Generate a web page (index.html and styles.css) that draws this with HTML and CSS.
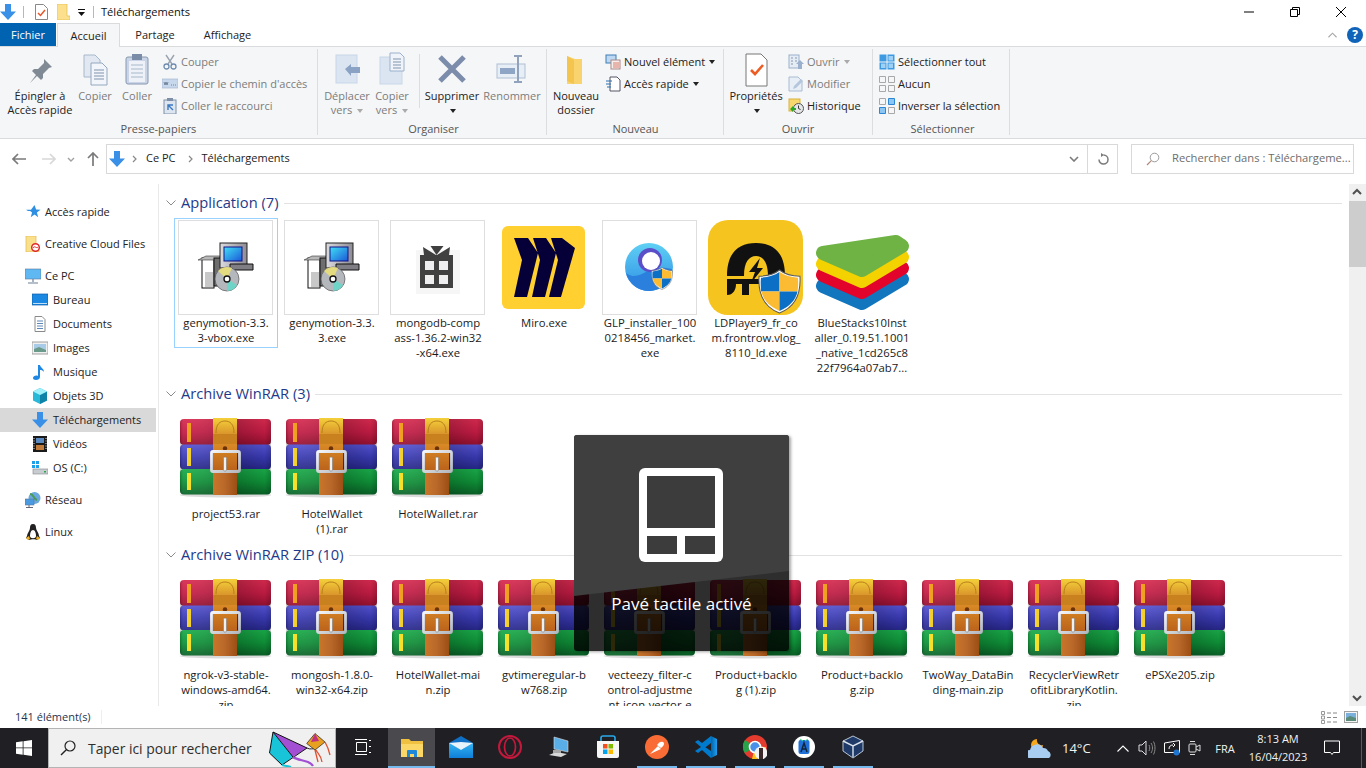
FILE: index.html
```html
<!DOCTYPE html>
<html lang="fr">
<head>
<meta charset="utf-8">
<title>Téléchargements</title>
<link rel="stylesheet" href="styles.css">
</head>
<body>
<svg class="defs" aria-hidden="true">
  <defs>
    <linearGradient id="gRed" x1="0" y1="0" x2="0" y2="1"><stop offset="0" stop-color="#d92b50"/><stop offset=".5" stop-color="#c41c44"/><stop offset="1" stop-color="#96102f"/></linearGradient>
    <linearGradient id="gBlue" x1="0" y1="0" x2="0" y2="1"><stop offset="0" stop-color="#5654d4"/><stop offset=".5" stop-color="#3a3ab4"/><stop offset="1" stop-color="#262688"/></linearGradient>
    <linearGradient id="gGreen" x1="0" y1="0" x2="0" y2="1"><stop offset="0" stop-color="#1aac4a"/><stop offset=".5" stop-color="#0f9238"/><stop offset="1" stop-color="#0a6428"/></linearGradient>
    <linearGradient id="gShade" x1="0" y1="0" x2="1" y2="0"><stop offset="0" stop-color="#000" stop-opacity=".2"/><stop offset=".05" stop-color="#fff" stop-opacity=".06"/><stop offset=".6" stop-color="#000" stop-opacity=".22"/><stop offset=".93" stop-color="#000" stop-opacity=".05"/><stop offset="1" stop-color="#000" stop-opacity=".2"/></linearGradient>
    <linearGradient id="gGold" x1="0" y1="0" x2="0" y2="1"><stop offset="0" stop-color="#f4d03a"/><stop offset="1" stop-color="#d8922a"/></linearGradient>
    <linearGradient id="gBelt" x1="0" y1="0" x2="0" y2="1"><stop offset="0" stop-color="#d98a26"/><stop offset="1" stop-color="#b9601a"/></linearGradient>
    <linearGradient id="gBelt2" x1="0" y1="0" x2="1" y2="0"><stop offset="0" stop-color="#c9762a"/><stop offset=".5" stop-color="#b9682a"/><stop offset="1" stop-color="#9c4e14"/></linearGradient>
    <linearGradient id="gSilver" x1="0" y1="0" x2="1" y2="1"><stop offset="0" stop-color="#f4f5f7"/><stop offset="1" stop-color="#b4b8be"/></linearGradient>
    <linearGradient id="gScreen" x1="0" y1="0" x2="1" y2="1"><stop offset="0" stop-color="#3fe0f4"/><stop offset="1" stop-color="#1b58d8"/></linearGradient>
    <linearGradient id="gMon" x1="0" y1="0" x2="1" y2="0"><stop offset="0" stop-color="#dcdce0"/><stop offset="1" stop-color="#8c8c92"/></linearGradient>
    <linearGradient id="gGlp" x1="0" y1="0" x2="0" y2="1"><stop offset="0" stop-color="#5fd0f4"/><stop offset="1" stop-color="#2f8fe4"/></linearGradient>
    <linearGradient id="gMail" x1="0" y1="0" x2="0" y2="1"><stop offset="0" stop-color="#33b6f2"/><stop offset="1" stop-color="#0f7ed8"/></linearGradient>
    <linearGradient id="gVs" x1="0" y1="0" x2="1" y2="0"><stop offset="0" stop-color="#0065a9"/><stop offset="1" stop-color="#1f9cf0"/></linearGradient>
    <symbol id="rar" viewBox="0 0 96 96">
      <ellipse cx="47.500" cy="84" rx="46" ry="2.500" fill="#000" opacity=".14"/>
      <rect x="2" y="8" width="91" height="26" rx="4" fill="url(#gRed)"/>
      <rect x="2" y="33.500" width="91" height="25" rx="4" fill="url(#gBlue)"/>
      <rect x="2" y="58" width="91" height="25.500" rx="4" fill="url(#gGreen)"/>
      <rect x="2" y="8" width="91" height="75.500" rx="4" fill="url(#gShade)"/>
      <rect x="9" y="12" width="4" height="19" fill="#f0a020"/>
      <rect x="9" y="37" width="4" height="18" fill="#f2d030"/>
      <rect x="9" y="62" width="4" height="17" fill="#f6e02c"/>
      <rect x="35" y="7" width="24" height="17" fill="url(#gGold)"/>
      <path d="M38 22c0-9 4-12 9-12s9 3 9 12" fill="none" stroke="#b87e1c" stroke-width="1"/>
      <rect x="35" y="23" width="24" height="10" fill="#c9801f"/>
      <rect x="35" y="33" width="24" height="28" fill="url(#gBelt)"/>
      <circle cx="47" cy="37.500" r="2.200" fill="#6b3208"/>
      <rect x="35" y="60" width="24" height="24" fill="url(#gBelt2)"/>
      <rect x="33.500" y="40.500" width="28" height="20" rx="1.500" fill="none" stroke="url(#gSilver)" stroke-width="2.800"/>
      <rect x="45.500" y="46" width="3" height="14" rx="1.200" fill="#eef0f2" stroke="#7a7a7a" stroke-width=".6"/>
    </symbol>
    <symbol id="setup" viewBox="0 0 96 96">
      <rect x="24" y="38" width="12" height="30" fill="#fff" stroke="#111"/>
      <rect x="27" y="52" width="8" height="15" fill="#c8c8c8"/>
      <path d="M20 40l8-4h14v4z" fill="#b8b8b8" stroke="#333" stroke-width=".6"/>
      <rect x="36" y="38" width="10" height="28" fill="#6e6e6e" stroke="#111"/>
      <rect x="42" y="23" width="27" height="25" fill="url(#gMon)" stroke="#222"/>
      <rect x="46" y="27" width="18" height="14" fill="url(#gScreen)" stroke="#12128a"/>
      <path d="M52 44h23v6H52z" fill="#7e7e84" stroke="#111"/>
      <circle cx="49" cy="59" r="12" fill="#b4b8bc" stroke="#555" stroke-width=".7"/>
      <path d="M49 59l-9-8a12 12 0 0 1 14-3z" fill="#e4da80"/>
      <path d="M49 59l10 6a12 12 0 0 1-10 6z" fill="#6ed4c8"/>
      <circle cx="49" cy="59" r="3" fill="#fff" stroke="#111" stroke-width="1.300"/>
    </symbol>
    <symbol id="shield" viewBox="0 0 42 44">
      <path d="M21 1c5 4 12 6 20 6 1 16-4 30-20 36C5 37 0 23 1 7c8 0 15-2 20-6z" fill="#fff" stroke="#5a5a5a"/>
      <path d="M21 3v19H3C2.500 16 2.500 11 3 8.500 10 8 16 6.500 21 3z" fill="#0b6fc6"/>
      <path d="M21 3c5 3.500 11 5 18 5.500.4 4 .4 9-.4 13.500H21z" fill="#fbbb33"/>
      <path d="M3.300 22H21v19C10 36 5 30 3.300 22z" fill="#fbbb33"/>
      <path d="M21 22h17.600C36.800 30 32 36 21 41z" fill="#0b6fc6"/>
    </symbol>
    <symbol id="down" viewBox="0 0 16 16">
      <path d="M5 0h6v7.500h5L8 16 0 7.500h5z" fill="#3a8fe6"/>
    </symbol>
  </defs>
</svg>

<div class="window">
  <header class="titlebar">
    <svg class="qa-down" viewBox="0 0 16 16"><use href="#down"/></svg>
    <span class="vsep"></span>
    <svg class="qa-prop" viewBox="0 0 13 16"><path d="M.5.500h8l4 4v11H.5z" fill="#fff" stroke="#888"/><path d="M3 9l2.500 2.500L10 6" fill="none" stroke="#e8562a" stroke-width="1.500"/></svg>
    <svg class="qa-fold" viewBox="0 0 13 16"><path d="M0 0h10v12h3v4H0z" fill="#fce08e" stroke="#e8c050" stroke-width=".8"/></svg>
    <svg class="qa-more" viewBox="0 0 8 8"><path d="M0 0h7v1H0zM0 3h7L3.500 7z" fill="#111"/></svg>
    <span class="vsep vsep-b"></span>
    <span class="wintitle">Téléchargements</span>
    <div class="winctl">
      <span class="winbtn"><svg viewBox="0 0 10 10"><path d="M0 5h10" stroke="#000"/></svg></span>
      <span class="winbtn"><svg viewBox="0 0 10 10"><path d="M.5 2.500h7v7h-7zM2.500 2.500v-2h7v7h-2" fill="none" stroke="#000"/></svg></span>
      <span class="winbtn"><svg viewBox="0 0 10 10"><path d="M0 0l10 10M10 0L0 10" stroke="#000"/></svg></span>
    </div>
  </header>

  <nav class="tabs">
    <span class="tab tab-file">Fichier</span>
    <span class="tab tab-on">Accueil</span>
    <span class="tab tab-share">Partage</span>
    <span class="tab tab-view">Affichage</span>
    <span class="tabs-right">
      <svg class="collapse" viewBox="0 0 10 6"><path d="M.5 5.500L5 1l4.500 4.500" fill="none" stroke="#a8a8a8" stroke-width="1.200"/></svg>
      <span class="help">?</span>
    </span>
  </nav>

  <section class="ribbon">
    <div class="rgroup rg-1">
      <div class="rbody">
        <div class="rbtn w74"><svg class="ric" viewBox="0 0 36 36"><path d="M22 8l8 8-3 1-6 6v4l-2 2-4-4-7 7 6-8-4-4 2-2h4l6-6z" fill="#808a94"/></svg><span class="rlabel">Épingler à<br>Accès rapide</span></div>
        <div class="rbtn w36 off"><svg class="ric" viewBox="0 0 36 36"><path d="M7 4h11l5 5v17H7z" fill="#e2e8f2" stroke="#a8b8cc"/><path d="M14 12h11l5 5v17H14z" fill="#f2f5fa" stroke="#94a8c0"/><path d="M17 19h10M17 22h10M17 25h10M17 28h10" stroke="#7e93ad"/></svg><span class="rlabel">Copier</span></div>
        <div class="rbtn w48 off"><svg class="ric" viewBox="0 0 36 36"><rect x="7" y="6" width="22" height="27" rx="2" fill="#c9d4e6" stroke="#8898b0"/><rect x="10" y="10" width="16" height="21" fill="#eef2f8"/><path d="M12 14h12M12 18h12M12 22h12M12 26h12" stroke="#a8b8cc"/><rect x="13" y="3" width="10" height="6" fill="#7a8ca8"/></svg><span class="rlabel">Coller</span></div>
        <div class="rcol rc-1">
          <div class="rsmall off"><svg class="sic" viewBox="0 0 16 16"><path d="M4 1l6 9M12 1L6 10" stroke="#9aa4b0" stroke-width="1.400" fill="none"/><circle cx="4.500" cy="12.500" r="2.500" fill="none" stroke="#6f8db0" stroke-width="1.300"/><circle cx="11.500" cy="12.500" r="2.500" fill="none" stroke="#6f8db0" stroke-width="1.300"/></svg>Couper</div>
          <div class="rsmall off"><svg class="sic" viewBox="0 0 16 16"><rect y="3" width="16" height="9" fill="#c8d8ec" stroke="#9ab0cc" stroke-width=".6"/><path d="M2 6l1 3 1-3 1 3 1-3M9 9h1M11 9h1M13 9h1" stroke="#50667e" stroke-width=".7" fill="none"/></svg>Copier le chemin d'accès</div>
          <div class="rsmall off"><svg class="sic" viewBox="0 0 16 16"><rect x="2" y="2" width="12" height="14" fill="#dde5f0" stroke="#7e90a8"/><rect x="5" y="0" width="6" height="3" fill="#7e90a8"/><path d="M6 12V7h5M6 7l5 5" stroke="#3a78c0" stroke-width="1.400" fill="none"/></svg>Coller le raccourci</div>
        </div>
      </div>
      <div class="rname">Presse-papiers</div>
    </div>

    <div class="rgroup rg-2">
      <div class="rbody">
        <div class="rbtn w46 off"><svg class="ric" viewBox="0 0 36 36"><rect x="7" y="4" width="21" height="28" fill="#dbe5f2" stroke="#c8d6e8"/><path d="M16 18l6-5v3h9v6h-9v3z" fill="#8aa2c4"/></svg><span class="rlabel">Déplacer<br>vers <i class="caret caret-off"></i></span></div>
        <div class="rbtn w44 off"><svg class="ric" viewBox="0 0 36 36"><rect x="6" y="6" width="22" height="27" fill="#dbe5f2" stroke="#c8d6e8"/><path d="M16 2h10l4 4v14H16z" fill="#f0f4fa" stroke="#9ab0cc"/><path d="M19 8h8M19 11h8M19 14h8M19 17h8" stroke="#7e93ad"/></svg><span class="rlabel">Copier<br>vers <i class="caret caret-off"></i></span></div>
        <span class="rdiv"></span>
        <div class="rbtn w60"><svg class="ric" viewBox="0 0 36 36"><path d="M6 6l24 24M30 6L6 30" stroke="#7c8cab" stroke-width="5"/></svg><span class="rlabel">Supprimer<br><i class="caret"></i></span></div>
        <div class="rbtn w60 off"><svg class="ric" viewBox="0 0 36 36"><rect x="3" y="13" width="28" height="14" fill="#e8eef6" stroke="#b0c0d4"/><rect x="6" y="17" width="15" height="6" fill="#8fa5c6"/><path d="M24 5v26M20 5h8M20 31h8" stroke="#90a2bc" stroke-width="2"/></svg><span class="rlabel">Renommer</span></div>
      </div>
      <div class="rname">Organiser</div>
    </div>

    <div class="rgroup rg-3">
      <div class="rbody">
        <div class="rbtn w50"><svg class="ric" viewBox="0 0 36 36"><path d="M9 5l8 3h7v25H9z" fill="#f8d36e"/><path d="M9 5l7 4v24l-7-3z" fill="#f3c44e"/></svg><span class="rlabel">Nouveau<br>dossier</span></div>
        <div class="rcol rc-3">
          <div class="rsmall"><svg class="sic" viewBox="0 0 16 16"><rect x="1" y="1" width="10" height="8" fill="#bcd8f2" stroke="#3f7fb5"/><rect x="6" y="6" width="9" height="9" fill="#f6f0ec" stroke="#a88"/><path d="M8 9h6M8 11h6M8 13h6" stroke="#d87a6a"/></svg>Nouvel élément<i class="caret caret-gap"></i></div>
          <div class="rsmall"><svg class="sic" viewBox="0 0 16 16"><path d="M5 1h7l3 3v11H5z" fill="#fff" stroke="#556"/><path d="M1 5h6M1 8h5M2 11h4" stroke="#2c6fb0"/></svg>Accès rapide<i class="caret caret-gap"></i></div>
        </div>
      </div>
      <div class="rname">Nouveau</div>
    </div>

    <div class="rgroup rg-4">
      <div class="rbody">
        <div class="rbtn w58"><svg class="ric" viewBox="0 0 36 36"><path d="M8 3h15l6 6v26H8z" fill="#fff" stroke="#777"/><path d="M13 19l4 4 8-9" fill="none" stroke="#ee5c24" stroke-width="2.600"/></svg><span class="rlabel">Propriétés<br><i class="caret"></i></span></div>
        <div class="rcol rc-4">
          <div class="rsmall off"><svg class="sic" viewBox="0 0 16 16"><rect x="1" y="1" width="10" height="13" fill="#e6ecf4" stroke="#9ab0cc"/><path d="M3 4h2M3 7h2M3 10h2M7 4h2M7 7h2" stroke="#8298b4"/><path d="M12 6l4 4h-2v5h-4v-5H8z" fill="#9ab0cc"/></svg>Ouvrir<i class="caret caret-off caret-gap"></i></div>
          <div class="rsmall off"><svg class="sic" viewBox="0 0 16 16"><path d="M1 1h9l4 4v10H1z" fill="#e8eef6" stroke="#a8bcd4"/><path d="M5 13l1-3 7-7 2 2-7 7z" fill="#b4c6dc"/></svg>Modifier</div>
          <div class="rsmall"><svg class="sic" viewBox="0 0 16 16"><rect x="1" y="1" width="11" height="12" fill="#f8d86c" stroke="#d8b240"/><circle cx="10.500" cy="10.500" r="5" fill="#e4e6e8" stroke="#555"/><path d="M10.500 7.500v3l2 1" stroke="#333" fill="none"/><path d="M2 11l3-3v2h3v2H5v2z" fill="#2aa82a"/></svg>Historique</div>
        </div>
      </div>
      <div class="rname">Ouvrir</div>
    </div>

    <div class="rgroup rg-5">
      <div class="rbody">
        <div class="rcol rc-5">
          <div class="rsmall"><svg class="sic" viewBox="0 0 16 16"><rect x=".5" y=".5" width="15" height="15" fill="#3e9be2"/><path d="M8 0v16M0 8h16" stroke="#f5f6f7"/><rect x="9.500" y="2" width="4.500" height="4.500" fill="#9fd0f5"/><rect x="2" y="9.500" width="4.500" height="4.500" fill="#9fd0f5"/><rect x="9.500" y="9.500" width="4.500" height="4.500" fill="#9fd0f5"/></svg>Sélectionner tout</div>
          <div class="rsmall"><svg class="sic" viewBox="0 0 16 16"><path d="M.5.500h6v6h-6zM9.500.500h6v6h-6zM.5 9.500h6v6h-6zM9.500 9.500h6v6h-6z" fill="none" stroke="#a8a8a8"/></svg>Aucun</div>
          <div class="rsmall"><svg class="sic" viewBox="0 0 16 16"><path d="M.5.500h6v6h-6zM9.500 9.500h6v6h-6z" fill="none" stroke="#a8a8a8"/><path d="M9.500.500h6v6h-6zM.5 9.500h6v6h-6z" fill="#8cc6f2" stroke="#2c86d6"/></svg>Inverser la sélection</div>
        </div>
      </div>
      <div class="rname">Sélectionner</div>
    </div>
  </section>

  <div class="navrow">
    <svg class="nv nv-back" viewBox="0 0 14 12"><path d="M6 1L1 6l5 5M1 6h13" fill="none" stroke="#7a7a7a" stroke-width="1.700"/></svg>
    <svg class="nv nv-fwd" viewBox="0 0 14 12"><path d="M8 1l5 5-5 5M13 6H0" fill="none" stroke="#d8d8d8" stroke-width="1.700"/></svg>
    <svg class="nv nv-drop" viewBox="0 0 8 5"><path d="M1 1l3 3 3-3" fill="none" stroke="#a0a0a0" stroke-width="1.400"/></svg>
    <svg class="nv nv-up" viewBox="0 0 12 14"><path d="M1 6l5-5 5 5M6 1v13" fill="none" stroke="#7a7a7a" stroke-width="1.700"/></svg>
    <div class="addr">
      <svg class="addr-ic" viewBox="0 0 16 16"><use href="#down"/></svg>
      <svg class="crumb-sep" viewBox="0 0 5 8"><path d="M1 1l3 3-3 3" fill="none" stroke="#888" stroke-width="1.200"/></svg>
      <span class="crumb">Ce PC</span>
      <svg class="crumb-sep" viewBox="0 0 5 8"><path d="M1 1l3 3-3 3" fill="none" stroke="#888" stroke-width="1.200"/></svg>
      <span class="crumb">Téléchargements</span>
      <svg class="addr-drop" viewBox="0 0 10 6"><path d="M1 1l4 4 4-4" fill="none" stroke="#7a7a7a" stroke-width="1.600"/></svg>
      <span class="addr-refresh"><svg viewBox="0 0 12 12"><path d="M6.500 2A4.500 4.500 0 1 1 2 6.500" fill="none" stroke="#7a7a7a" stroke-width="1.500"/><path d="M4 0l3 2-3 2z" fill="#7a7a7a"/></svg></span>
    </div>
    <div class="searchbox">
      <svg class="search-ic" viewBox="0 0 14 14"><circle cx="8.500" cy="5.500" r="4.300" fill="none" stroke="#9a9aa0"/><path d="M5.300 8.700L1 13" stroke="#b08878" stroke-width="1.200"/></svg>
      <span class="search-text">Rechercher dans : Téléchargeme...</span>
    </div>
  </div>

  <div class="work">
    <aside class="side">
      <div class="sgroup">
        <div class="sitem top"><svg class="sico" viewBox="0 0 16 16"><path d="M9.500 1l1.600 4.600 4.400.1-3.600 2.800 1.300 4.700-3.700-2.700-3.800 2.700 1.400-4.700-2-1.500H3L1 5.800h5z" fill="#2e8fe2"/></svg>Accès rapide</div>
      </div>
      <div class="sgroup">
        <div class="sitem top"><svg class="sico" viewBox="0 0 16 16"><path d="M1 0h10v11h3v5H1z" fill="#fbe08c" stroke="#e0b850" stroke-width=".7"/><circle cx="10.500" cy="11.500" r="3.800" fill="#fff" stroke="#e02828" stroke-width="1.500"/><path d="M8 12c2-3 3 1 5-1" stroke="#e02828" fill="none"/></svg>Creative Cloud Files</div>
      </div>
      <div class="sgroup">
        <div class="sitem top"><svg class="sico" viewBox="0 0 16 16"><rect y="1" width="16" height="10" fill="#5fb8f2" stroke="#5a7a9a" stroke-width=".6"/><path d="M8 11v3M3 15h10" stroke="#6a8098" stroke-width="1.200"/></svg>Ce PC</div>
        <div class="sitem sub"><svg class="sico" viewBox="0 0 16 16"><rect y="2" width="16" height="11" fill="#1b88e2" stroke="#0f5ea8" stroke-width=".7"/><path d="M1 11.500h14" stroke="#bfe0f8"/></svg>Bureau</div>
        <div class="sitem sub"><svg class="sico" viewBox="0 0 16 16"><path d="M3 .5h7l3 3v12H3z" fill="#fff" stroke="#8a8a8a"/><path d="M5 5h6M5 7.500h6M5 10h6M5 12.500h6" stroke="#5b88b8"/></svg>Documents</div>
        <div class="sitem sub"><svg class="sico" viewBox="0 0 16 16"><rect y="2" width="16" height="12" fill="#f0f0f0" stroke="#8a8a8a" stroke-width=".8"/><rect x="2" y="4" width="12" height="8" fill="#a8cce8"/><path d="M2 9l5-2 7 3v2H2z" fill="#6a9a8a"/></svg>Images</div>
        <div class="sitem sub"><svg class="sico" viewBox="0 0 16 16"><path d="M6 1h2c.5 3 4 3.500 4 7-1-1.500-2.500-2-4-2v7c0 2-2 3-4 3s-3-1-3-2c0-2 3-3 5-2z" fill="#1f88e2"/></svg>Musique</div>
        <div class="sitem sub"><svg class="sico" viewBox="0 0 16 16"><path d="M8 0l7 3.500v9L8 16l-7-3.500v-9z" fill="#28b8d8"/><path d="M8 7l7-3.500v9L8 16z" fill="#0f82a8"/><path d="M8 0l7 3.500L8 7 1 3.500z" fill="#9ff0f8"/></svg>Objets 3D</div>
        <div class="sitem sub sel"><svg class="sico" viewBox="0 0 16 16"><use href="#down"/></svg>Téléchargements</div>
        <div class="sitem sub"><svg class="sico" viewBox="0 0 16 16"><rect x="1" y="0" width="14" height="16" fill="#1a1a1a"/><rect x="4" y="2" width="8" height="5" fill="#5a88c0"/><rect x="4" y="9" width="8" height="5" fill="#c07a3a"/><path d="M2 2v12M14 2v12" stroke="#ddd" stroke-dasharray="1 1.500"/></svg>Vidéos</div>
        <div class="sitem sub"><svg class="sico" viewBox="0 0 16 16"><rect x="0" y="1" width="3" height="3" fill="#1ea0e8"/><rect x="4" y="1" width="3" height="3" fill="#1ea0e8"/><rect x="0" y="5" width="3" height="3" fill="#1ea0e8"/><rect x="4" y="5" width="3" height="3" fill="#1ea0e8"/><rect x="1" y="9" width="15" height="5" fill="#c8ccd0" stroke="#80868c" stroke-width=".6"/><rect x="12" y="11" width="2" height="1.500" fill="#2aaa4a"/></svg>OS (C:)</div>
      </div>
      <div class="sgroup">
        <div class="sitem top"><svg class="sico" viewBox="0 0 16 16"><circle cx="9.500" cy="6" r="6" fill="#6aa8e0"/><path d="M5 2c4 0 3 5 7 6" stroke="#4a9a5a" stroke-width="2" fill="none"/><rect y="7" width="9" height="6" fill="#4a9ae2" stroke="#5a7a9a" stroke-width=".6"/><path d="M4 13v2M1 15.500h7" stroke="#667"/></svg>Réseau</div>
      </div>
      <div class="sgroup">
        <div class="sitem top"><svg class="sico" viewBox="0 0 16 16"><path d="M8 0c2.500 0 3 2 3 4 0 2 3 5 3 8l1 2-3 2c-1-1-6-1-8 0L1 14l1-2c0-3 3-5 3-8 0-2 .5-4 3-4z" fill="#222"/><path d="M8 6c2 0 3 3 3 6s-6 3-6 0 1-6 3-6z" fill="#fff"/><path d="M1 14l3-2 1 3-2 1zM15 14l-3-2-1 3 2 1z" fill="#f0b020"/></svg>Linux</div>
      </div>
    </aside>

    <main class="content">
      <section class="group">
        <h2 class="ghead"><svg class="gchev" viewBox="0 0 10 6"><path d="M.5.500L5 5 9.500.5" fill="none" stroke="#8a8a8a"/></svg><span>Application (7)</span><i class="gline"></i></h2>
        <div class="tiles">
          <div class="tile selected"><div class="thumb framed"><svg class="full" viewBox="0 0 96 96"><use href="#setup"/></svg></div><div class="lbl">genymotion-3.3.<br>3-vbox.exe</div></div>
          <div class="tile"><div class="thumb framed"><svg class="full" viewBox="0 0 96 96"><use href="#setup"/></svg></div><div class="lbl">genymotion-3.3.<br>3.exe</div></div>
          <div class="tile"><div class="thumb framed"><svg class="full" viewBox="0 0 96 96"><rect x="26" y="30" width="44" height="44" fill="#f6f6f6"/><path d="M30 35h33v33H30z" fill="#404040"/><path d="M46 35l-13-8 1 8zM47 35l13-8-1 8z" fill="#404040"/><path d="M46.500 35l-6-9h13z" fill="#404040"/><rect x="35" y="41" width="9" height="9" fill="#eeeef0"/><rect x="49" y="41" width="9" height="9" fill="#eeeef0"/><rect x="35" y="55" width="9" height="9" fill="#eeeef0"/><rect x="49" y="55" width="9" height="9" fill="#eeeef0"/></svg></div><div class="lbl">mongodb-comp<br>ass-1.36.2-win32<br>-x64.exe</div></div>
          <div class="tile"><div class="thumb"><svg class="full" viewBox="0 0 96 96"><rect x="6" y="6" width="83" height="83" rx="6" fill="#ffd02f"/><path d="M18 18h14l10 15-11 44H18l8-37zM37 18h13l10 15-11 44H36l8-37zM55 18h11l13 10-14 49H53l9-37z" fill="#050038"/></svg></div><div class="lbl">Miro.exe</div></div>
          <div class="tile"><div class="thumb framed"><svg class="full" viewBox="0 0 96 96"><circle cx="47" cy="47" r="24" fill="url(#gGlp)"/><path d="M24 53c8 6 14 2 22-2s14-4 24-2c-2 13-12 22-23 22-11 0-21-8-23-18z" fill="#2a80dc"/><circle cx="48" cy="40" r="12" fill="#5a4fc8"/><circle cx="49" cy="41" r="9" fill="#fff"/><svg x="49" y="47" width="22" height="23" viewBox="0 0 42 44"><use href="#shield"/></svg></svg></div><div class="lbl">GLP_installer_100<br>0218456_market.<br>exe</div></div>
          <div class="tile"><div class="thumb"><svg class="full" viewBox="0 0 96 96"><rect width="95" height="95" rx="20" fill="#f5c41e"/><path d="M19 56C19 33 30 23 48 23s29 10 29 33H60C60 42 55 36 48 36s-12 6-12 20z" fill="#111"/><path d="M19 59h32v5H41v11H34V64h-6c0 6-3 11-9 11z" fill="#111"/><path d="M52 38L41 52h6l-4 11 12-15h-6z" fill="#111"/><svg x="50" y="49" width="43" height="45" viewBox="0 0 42 44"><use href="#shield"/></svg></svg></div><div class="lbl">LDPlayer9_fr_co<br>m.frontrow.vlog_<br>8110_ld.exe</div></div>
          <div class="tile"><div class="thumb"><svg class="full" viewBox="0 0 96 96"><g stroke-linejoin="round" stroke-width="14"><path d="M9 33L82 22l6 4-40 24z" transform="translate(0 33)" fill="#1176bd" stroke="#1176bd"/><path d="M9 33L82 22l6 4-40 24z" transform="translate(0 22)" fill="#e2042a" stroke="#e2042a"/><path d="M9 33L82 22l6 4-40 24z" transform="translate(0 11)" fill="#f3d200" stroke="#f3d200"/><path d="M9 33L82 22l6 4-40 24z" fill="#6fb345" stroke="#6fb345"/></g></svg></div><div class="lbl">BlueStacks10Inst<br>aller_0.19.51.1001<br>_native_1cd265c8<br>22f7964a07ab7...</div></div>
        </div>
      </section>
      <section class="group">
        <h2 class="ghead"><svg class="gchev" viewBox="0 0 10 6"><path d="M.5.500L5 5 9.500.5" fill="none" stroke="#8a8a8a"/></svg><span>Archive WinRAR (3)</span><i class="gline"></i></h2>
        <div class="tiles">
          <div class="tile"><div class="thumb"><svg class="full" viewBox="0 0 96 96"><use href="#rar"/></svg></div><div class="lbl">project53.rar</div></div>
          <div class="tile"><div class="thumb"><svg class="full" viewBox="0 0 96 96"><use href="#rar"/></svg></div><div class="lbl">HotelWallet<br>(1).rar</div></div>
          <div class="tile"><div class="thumb"><svg class="full" viewBox="0 0 96 96"><use href="#rar"/></svg></div><div class="lbl">HotelWallet.rar</div></div>
        </div>
      </section>
      <section class="group">
        <h2 class="ghead"><svg class="gchev" viewBox="0 0 10 6"><path d="M.5.500L5 5 9.500.5" fill="none" stroke="#8a8a8a"/></svg><span>Archive WinRAR ZIP (10)</span><i class="gline"></i></h2>
        <div class="tiles">
          <div class="tile"><div class="thumb"><svg class="full" viewBox="0 0 96 96"><use href="#rar"/></svg></div><div class="lbl">ngrok-v3-stable-<br>windows-amd64.<br>zip</div></div>
          <div class="tile"><div class="thumb"><svg class="full" viewBox="0 0 96 96"><use href="#rar"/></svg></div><div class="lbl">mongosh-1.8.0-<br>win32-x64.zip</div></div>
          <div class="tile"><div class="thumb"><svg class="full" viewBox="0 0 96 96"><use href="#rar"/></svg></div><div class="lbl">HotelWallet-mai<br>n.zip</div></div>
          <div class="tile"><div class="thumb"><svg class="full" viewBox="0 0 96 96"><use href="#rar"/></svg></div><div class="lbl">gvtimeregular-b<br>w768.zip</div></div>
          <div class="tile"><div class="thumb"><svg class="full" viewBox="0 0 96 96"><use href="#rar"/></svg></div><div class="lbl">vecteezy_filter-c<br>ontrol-adjustme<br>nt-icon-vector-e</div></div>
          <div class="tile"><div class="thumb"><svg class="full" viewBox="0 0 96 96"><use href="#rar"/></svg></div><div class="lbl">Product+backlo<br>g (1).zip</div></div>
          <div class="tile"><div class="thumb"><svg class="full" viewBox="0 0 96 96"><use href="#rar"/></svg></div><div class="lbl">Product+backlo<br>g.zip</div></div>
          <div class="tile"><div class="thumb"><svg class="full" viewBox="0 0 96 96"><use href="#rar"/></svg></div><div class="lbl">TwoWay_DataBin<br>ding-main.zip</div></div>
          <div class="tile"><div class="thumb"><svg class="full" viewBox="0 0 96 96"><use href="#rar"/></svg></div><div class="lbl">RecyclerViewRetr<br>ofitLibraryKotlin.<br>zip</div></div>
          <div class="tile"><div class="thumb"><svg class="full" viewBox="0 0 96 96"><use href="#rar"/></svg></div><div class="lbl">ePSXe205.zip</div></div>
        </div>
      </section>
    </main>

    <div class="vscroll">
      <svg class="sb-arrow" viewBox="0 0 16 17"><path d="M4 10l4-4 4 4" fill="none" stroke="#505050" stroke-width="2"/></svg>
      <div class="sb-thumb"></div>
      <div class="sb-track"></div>
      <svg class="sb-arrow" viewBox="0 0 16 17"><path d="M4 7l4 4 4-4" fill="none" stroke="#505050" stroke-width="2"/></svg>
    </div>
  </div>

  <footer class="status">
    <span class="count">141 élément(s)</span>
    <span class="status-right">
      <svg class="st-det" viewBox="0 0 16 13"><path d="M.5.500h3v3h-3zM.5 5h3v3h-3zM.5 9.500h3v3h-3z" fill="none" stroke="#999"/><path d="M6 2h4M12 2h4M6 6.500h4M12 6.500h4M6 11h4M12 11h4" stroke="#888"/></svg>
      <svg class="st-big" viewBox="0 0 14 12"><rect x=".5" y=".5" width="13" height="11" fill="#f4f4f4" stroke="#a0a0a0"/><rect x="2" y="2" width="10" height="8" fill="#7ab0dc"/><path d="M2 7l4-2 6 2v3H2z" fill="#5a8a78"/></svg>
    </span>
  </footer>
</div>

<div class="toast">
  <div class="toast-light"></div>
  <svg class="toast-ic" viewBox="0 0 84 94"><path d="M6 0h72a6 6 0 0 1 6 6v82a6 6 0 0 1-6 6H6a6 6 0 0 1-6-6V6a6 6 0 0 1 6-6z" fill="#fff"/><rect x="8" y="8" width="68" height="52" fill="#3c3c3c"/><rect x="8" y="68" width="30" height="18" fill="#3c3c3c"/><rect x="46" y="68" width="30" height="18" fill="#3c3c3c"/></svg>
  <div class="toast-text">Pavé tactile activé</div>
</div>

<div class="taskbar">
  <span class="start"><svg viewBox="0 0 16 16"><path d="M0 2.200l6.700-.9V7.500H0zM7.500 1.200L16 0v7.500H7.500zM0 8.300h6.700v6.400L0 13.800zM7.500 8.300H16V16l-8.500-1.200z" fill="#fff"/></svg></span>
  <div class="tsearch">
    <svg class="ts-ic" viewBox="0 0 16 16"><circle cx="10" cy="6" r="5" fill="none" stroke="#222" stroke-width="1.200"/><path d="M6.300 9.700L1 15" stroke="#222" stroke-width="1.400"/></svg>
    <span class="ts-text">Taper ici pour rechercher</span>
    <svg class="kites" viewBox="0 0 66 38"><path d="M4 3l20 25-11 8L.5 24z" fill="#18c4d8"/><path d="M4 3l34 16-14 9z" fill="#a24fd4"/><path d="M4 3l34 16-25 17L.5 24zM4 3l20 25" fill="none" stroke="#111"/><path d="M13 36c3 1 6 1 9 2" stroke="#18c4d8" stroke-width="2" fill="none"/><path d="M24 28c4 3 10 3 15 5 2 1 4 2 5 4" stroke="#a24fd4" stroke-width="2.200" fill="none"/><path d="M38 19c3 2 6 0 9 1" stroke="#222" fill="none"/><path d="M46 4.500l-8.300 10L46 21l10-8z" fill="#e8a020" stroke="#222" stroke-width=".7"/><path d="M46 4.500L42 13l8-1z" fill="#c03080"/><path d="M46 21l3 12M47 21c2 4 5 5 6 12M56 13c3 5 4 9 5 13" stroke="#e05030" stroke-width="1.300" fill="none"/></svg>
  </div>
  <span class="tb tb-view"><svg viewBox="0 0 16 16"><path d="M1.500 3.500h10v9h-10zM0 .5h12M0 15.500h12M14 1.500h2M14 7.500h2M14 13.500h2" fill="none" stroke="#fff"/></svg></span>
  <span class="tb tb-active"><svg viewBox="0 0 24 24"><path d="M1 4h8l2 2h12v16H1z" fill="#f0c040"/><path d="M1 9h22v13H1z" fill="#fbd768"/><path d="M7 22v-6a1 1 0 0 1 1-1h8a1 1 0 0 1 1 1v6h-3v-3h-4v3z" fill="#1f88d8"/></svg></span>
  <span class="tb"><svg viewBox="0 0 24 24"><path d="M12 1l12 7v15H0V8z" fill="#0f6fc4"/><path d="M0 8l12 7 12-7v15H0z" fill="url(#gMail)"/><path d="M0 8l12-1 12 1-12 7z" fill="#e8f4fc"/></svg></span>
  <span class="tb"><svg viewBox="0 0 24 24"><ellipse cx="12" cy="12" rx="11" ry="11" fill="none" stroke="#c4183c" stroke-width="2"/><ellipse cx="12" cy="12" rx="5.500" ry="9" fill="none" stroke="#c4183c" stroke-width="1.700"/></svg></span>
  <span class="tb"><svg viewBox="0 0 24 24"><path d="M7 2l14 4v11L7 14z" fill="#5aaee8" stroke="#ddd" stroke-width=".6"/><path d="M2 20l7-3 11 2-6 3z" fill="#d8d8d8"/><path d="M6 15h8v3H6z" fill="#a8a8a8"/></svg></span>
  <span class="tb"><svg viewBox="0 0 24 24"><path d="M5 6V3a2 2 0 0 1 2-2h10a2 2 0 0 1 2 2v3" fill="none" stroke="#27a8e8" stroke-width="1.600"/><path d="M1 6h22v15a2 2 0 0 1-2 2H3a2 2 0 0 1-2-2z" fill="#f6f6f6"/><rect x="7" y="9" width="4.500" height="4.500" fill="#f25022"/><rect x="12.500" y="9" width="4.500" height="4.500" fill="#7fba00"/><rect x="7" y="14.500" width="4.500" height="4.500" fill="#00a4ef"/><rect x="12.500" y="14.500" width="4.500" height="4.500" fill="#ffb900"/></svg></span>
  <span class="tb on"><svg viewBox="0 0 24 24"><circle cx="12" cy="12" r="12" fill="#f96c35"/><path d="M5 19l8-8 3 3zM12 10c2-3 4-4 6-3s1 4-2 6z" fill="#fff"/></svg></span>
  <span class="tb on"><svg viewBox="0 0 24 24"><path d="M17 1l6 3v16l-6 3z" fill="url(#gVs)"/><path d="M17 1v7l-9 7-4 3-3-2 6-4-6-5 3-2 4 3zM17 16v7L8 15l3-3z" fill="#007acc"/></svg></span>
  <span class="tb on"><svg viewBox="0 0 24 24"><circle cx="12" cy="12" r="12" fill="#e33b2e"/><path d="M12 12L2 18A12 12 0 0 1 2 5z" fill="#2aa24a"/><path d="M12 12l11 0A12 12 0 0 1 9 24z" fill="#fbc116"/><circle cx="12" cy="12" r="5.500" fill="#4a90e8" stroke="#fff" stroke-width="1.600"/><circle cx="18" cy="18" r="6.500" fill="#f2f2f2"/><path d="M16 13h4v11h-4z" fill="#3a2a2a"/></svg></span>
  <span class="tb on"><svg viewBox="0 0 24 24"><circle cx="12" cy="12" r="11" fill="#fff"/><rect x="6.500" y="5" width="11" height="14" rx="2" fill="#1f70d8"/><path d="M8 4l3 2M16 4l-3 2" stroke="#3ddc84"/><path d="M9 17l3-9 3 9M10.500 14h3" fill="none" stroke="#123" stroke-width="1.400"/></svg></span>
  <span class="tb on"><svg viewBox="0 0 24 24"><path d="M12 1l10 5v10l-10 7-10-7V6z" fill="#1f3a68" stroke="#b8c4d4"/><path d="M2 6l10 5 10-5M12 11v11" fill="none" stroke="#d8e0ea" stroke-width="1.400"/></svg></span>

  <div class="tray">
    <span class="t-w42"><svg viewBox="0 0 26 24"><path d="M14 1a6 6 0 1 0 6 6 5 5 0 0 1-6-6z" fill="#f8a81c" transform="translate(-5 2)"/><path d="M2 22a4 4 0 0 1 0-8 7 7 0 0 1 13-2 5 5 0 0 1 5 3 4 4 0 0 1 1 7z" fill="#a8cdf0"/></svg></span>
    <span class="t-temp">14°C</span>
    <span class="t-w28"><svg viewBox="0 0 12 7"><path d="M.5 6.500L6 1l5.500 5.500" fill="none" stroke="#fff" stroke-width="1.100"/></svg></span>
    <span class="t-w20"><svg viewBox="0 0 18 16"><path d="M1 5h3l4-4v14l-4-4H1z" fill="none" stroke="#ddd"/><path d="M11 5c1 2 1 4 0 6M13 3c2 3 2 7 0 10M15.500 1.500c2 4 2 9 0 13" fill="none" stroke="#888"/></svg></span>
    <span class="t-w30"><svg viewBox="0 0 17 16"><path d="M.5 3l15-2.500v12h-15z" fill="none" stroke="#fff"/><path d="M5 9c0-3 2-4 4-4M9 3l2 2-2 2" fill="none" stroke="#fff"/><circle cx="12.500" cy="12.500" r="3" fill="#1f76d0"/></svg></span>
    <span class="t-w16"><svg viewBox="0 0 14 16"><rect x="1" y="4" width="7" height="8" rx="1" fill="none" stroke="#ddd"/><path d="M8 7l4-2v6l-4-2M2 1.500h5M2 14.500h5" fill="none" stroke="#ddd"/></svg></span>
    <span class="t-fra">FRA</span>
    <span class="t-clock"><b>8:13 AM</b><b>16/04/2023</b></span>
    <span class="t-notif"><svg viewBox="0 0 16 16"><path d="M.5 1h15v11.500H9.500L8 14.500 6.500 12.500H.5z" fill="none" stroke="#fff"/></svg></span>
    <i class="t-line"></i>
  </div>
</div>
</body>
</html>
```
FILE: styles.css
```css
* { box-sizing: border-box; }
html, body { margin: 0; padding: 0; }
body {
  width: 1366px; height: 768px; overflow: hidden; position: relative;
  font-family: "Open Sans", "Noto Sans", "Liberation Sans", sans-serif;
  font-size: 11px; color: #1a1a1a; background: #fff;
  display: flex; flex-direction: column;
}
.defs { display: block; width: 0; height: 0; overflow: hidden; }
.window { height: 728px; display: flex; flex-direction: column; overflow: hidden; flex: none; }

/* title bar */
.titlebar { height: 23px; display: flex; align-items: center; flex: none; }
.qa-down { width: 16px; height: 16px; }
.vsep { width: 1px; height: 12px; background: #b8b8b8; margin-left: 7px; }
.qa-prop { width: 13px; height: 16px; margin-left: 11px; }
.qa-fold { width: 13px; height: 16px; margin-left: 9px; }
.qa-more { width: 8px; height: 8px; margin-left: 8px; margin-top: 3px; }
.vsep-b { margin-left: 7px; }
.wintitle { margin-left: 7px; font-size: 11.100px; color: #111; }
.winctl { margin-left: auto; display: flex; height: 23px; padding-right: 2px; }
.winbtn { width: 46px; display: flex; align-items: center; justify-content: center; }
.winbtn svg { width: 10px; height: 10px; overflow: visible; }

/* tabs */
.tabs { height: 24px; display: flex; flex: none; border-bottom: 1px solid #dadbdc; align-items: stretch; }
.tab { display: flex; align-items: center; justify-content: center; font-size: 11px; height: 23px; color: #222; }
.tab-file { width: 56px; background: #0063b1; color: #fff; }
.tab-on { width: 63px; margin-left: 1px; height: 24px; background: #f5f6f7; border: 1px solid #dadbdc; border-bottom: 0; }
.tab-share { width: 70px; }
.tab-view { width: 75px; }
.tabs-right { margin-left: auto; display: flex; align-items: center; padding-right: 3px; }
.collapse { width: 9px; height: 6px; margin-right: 10px; }
.help {
  width: 16px; height: 16px; border-radius: 50%; background: #0f63b8; color: #fff;
  font: 700 12px/16px "Open Sans", sans-serif; text-align: center;
}

/* ribbon */
.ribbon { height: 92px; background: #f5f6f7; border-bottom: 1px solid #dadbdc; display: flex; padding: 2px 0 3px; flex: none; }
.rgroup { display: flex; flex-direction: column; border-right: 1px solid #dcdde0; flex: none; }
.rg-1 { width: 318px; padding-left: 3px; }
.rg-2 { width: 229px; padding-left: 6px; }
.rg-3 { width: 177px; padding-left: 4px; }
.rg-4 { width: 149px; padding-left: 3px; }
.rg-5 { width: 137px; padding-left: 6px; }
.rbody { flex: 1; display: flex; padding-top: 2px; }
.rname { height: 16px; line-height: 16px; margin-bottom: -2px; margin-left: -3px; text-align: center; color: #555; font-size: 11px; }
.rbtn { display: flex; flex-direction: column; align-items: center; flex: none; }
.ric { width: 36px; height: 36px; flex: none; }
.rlabel { font-size: 11px; line-height: 13.500px; text-align: center; white-space: nowrap; margin-top: 2px; color: #222; }
.off .rlabel, .rsmall.off { color: #7c7c7c; }
.w74 { width: 74px; } .w36 { width: 36px; } .w48 { width: 48px; }
.w46 { width: 46px; } .w44 { width: 44px; } .w60 { width: 60px; }
.w50 { width: 50px; } .w58 { width: 58px; }
.rdiv { width: 1px; height: 54px; background: #dcdde0; margin: 3px 2px 0 5px; flex: none; }
.rcol { display: flex; flex-direction: column; flex: none; }
.rc-1 { margin-left: 1px; }
.rc-3 { margin-left: 4px; }
.rc-4 { margin-left: 3px; }
.rsmall { height: 22px; padding-bottom: 2px; display: flex; align-items: center; white-space: nowrap; font-size: 11px; color: #222; }
.sic { width: 16px; height: 16px; margin: 2px 3px 0 0; flex: none; }
.caret { display: inline-block; width: 0; height: 0; border: 3.500px solid transparent; border-top: 4px solid #222; border-bottom: 0; margin-left: 2px; vertical-align: middle; }
.caret-off { border-top-color: #aaa; }
.caret-gap { margin-left: 4px; margin-top: 2px; }

/* navigation row */
.navrow { height: 45px; display: flex; align-items: center; flex: none; padding-bottom: 5px; }
.nv { flex: none; }
.nv-back { width: 14px; height: 12px; margin-left: 12px; }
.nv-fwd { width: 14px; height: 12px; margin-left: 16px; }
.nv-drop { width: 8px; height: 5px; margin-left: 11px; }
.nv-up { width: 12px; height: 14px; margin-left: 12px; }
.addr {
  width: 1012px; height: 30px; margin-left: 7px; border: 1px solid #d9d9d9;
  display: flex; align-items: center; flex: none;
}
.addr-ic { width: 16px; height: 16px; margin-left: 2px; flex: none; }
.crumb-sep { width: 5px; height: 8px; margin-left: 7px; margin-right: 9px; flex: none; }
.crumb { font-size: 11px; color: #222; margin-right: 5px; margin-bottom: 3px; }
.addr-drop { width: 10px; height: 6px; margin-left: auto; margin-right: 8px; flex: none; }
.addr-refresh { width: 30px; height: 28px; border-left: 1px solid #d9d9d9; display: flex; align-items: center; justify-content: center; flex: none; }
.addr-refresh svg { width: 12px; height: 12px; }
.searchbox {
  width: 223px; height: 30px; margin-left: 13px; border: 1px solid #d9d9d9;
  display: flex; align-items: center; color: #6d6d6d; font-size: 11.200px; white-space: nowrap; flex: none;
}
.search-ic { width: 14px; height: 14px; margin-left: 14px; margin-right: 12px; flex: none; }
.search-text { margin-bottom: 3px; }

/* work area */
.work { height: 522px; display: flex; flex: none; }
.side { width: 159px; border-right: 1px solid #e9e9e9; padding-top: 16px; flex: none; }
.sgroup { margin-bottom: 8px; }
.sitem { height: 24px; padding-bottom: 2px; display: flex; align-items: center; font-size: 11px; color: #222; white-space: nowrap; }
.top { padding-left: 25px; }
.sub { padding-left: 32px; width: 156px; }
.sico { width: 16px; height: 16px; margin: 2px 5px 0 0; flex: none; }
.top .sico { margin-right: 4px; }
.sel { background: #d9d9d9; }

.content { width: 1190px; height: 522px; overflow: hidden; padding: 9px 0 0 0; flex: none; }
.group { margin-bottom: 7px; }
.ghead { height: 20px; margin: 0 0 5px; padding: 0 0 2px 7px; display: flex; align-items: center; font-weight: 400; font-size: 14.700px; color: #1e3a8a; white-space: nowrap; width: 1183px; }
.gchev { width: 10px; height: 6px; margin: 2px 5px 0 0; flex: none; }
.gline { flex: 1; height: 1px; background: #e2e2e2; margin: 3px 0 0 5px; }
.tiles { display: flex; gap: 2px; padding-left: 15px; }
.tile { width: 104px; border: 1px solid transparent; padding: 1px 3px; flex: none; }
.selected { border-color: #99d1ff; height: 130px; }
.thumb { width: 95px; height: 95px; border: 1px solid transparent; }
.framed { border-color: #dedede; }
.full { display: block; width: 96px; height: 96px; margin: -1px; }
.lbl { width: 96px; text-align: center; font-size: 11.300px; line-height: 15px; white-space: nowrap; color: #1a1a1a; }

.vscroll { width: 17px; height: 522px; background: #f0f0f0; display: flex; flex-direction: column; flex: none; margin-left: auto; }
.sb-arrow { width: 16px; height: 17px; flex: none; }
.sb-thumb { height: 66px; background: #cdcdcd; flex: none; }
.sb-track { flex: 1; }

/* status */
.status { height: 22px; display: flex; align-items: center; padding-left: 15px; flex: none; }
.count { font-size: 11px; color: #1f3550; padding-right: 10px; border-right: 1px solid #eee; height: 14px; line-height: 14px; }
.status-right { margin-left: auto; display: flex; align-items: center; padding-right: 8px; }
.st-det { width: 16px; height: 13px; margin-right: 7px; }
.st-big { width: 14px; height: 12px; }

/* toast */
.toast {
  position: absolute; left: 574px; top: 435px; width: 215px; height: 216px;
  background: rgba(0, 0, 0, .82); border-radius: 3px; color: #fff; overflow: hidden;
  box-shadow: 2px 1px 3px rgba(0,0,0,.35);
}
.toast-light { position: absolute; inset: 0; background: #3f3f3f; clip-path: polygon(0 0, 100% 0, 100% 136px, 0 161px); }
.toast-ic { position: absolute; left: 65px; top: 33px; width: 84px; height: 94px; }
.toast-text { position: absolute; left: 0; right: 0; top: 157px; text-align: center; font-size: 17px; line-height: 24px; }

/* taskbar */
.taskbar { height: 40px; background: #202024; display: flex; flex: none; color: #fff; }
.start { width: 48px; display: flex; align-items: center; justify-content: center; }
.start svg { width: 16px; height: 16px; }
.tsearch { width: 288px; height: 40px; background: #f0f0f0; border: 1px solid #b4b4b4; display: flex; align-items: center; margin-right: 2px; overflow: hidden; flex: none; }
.ts-ic { width: 16px; height: 16px; margin-left: 11px; flex: none; }
.ts-text { margin-left: 12px; font-size: 13.900px; color: #2e2e2e; white-space: nowrap; }
.kites { width: 66px; height: 38px; margin-left: auto; flex: none; }
.tb { width: 40px; height: 40px; margin: 0 4.500px; display: flex; align-items: center; justify-content: center; border-bottom: 2px solid transparent; flex: none; }
.tb svg { width: 24px; height: 24px; }
.tb-view svg { width: 16px; height: 16px; }
.on { border-bottom-color: #76b9ed; }
.tb-active { width: 47px; margin: 0 1px; background: #4a4a4e; border-bottom-color: #76b9ed; }
.tray { margin-left: auto; width: 346px; display: flex; align-items: center; font-size: 12px; color: #f2f2f2; flex: none; }
.tray > span { display: flex; align-items: center; justify-content: center; height: 40px; flex: none; }
.t-w42 { width: 42px; } .t-w42 svg { width: 26px; height: 24px; }
.tray > .t-temp { width: 47px; justify-content: flex-start; font-size: 13px; }
.t-w28 { width: 28px; } .t-w28 svg { width: 12px; height: 7px; }
.t-w20 { width: 20px; } .t-w20 svg { width: 18px; height: 16px; }
.t-w30 { width: 30px; } .t-w30 svg { width: 17px; height: 16px; }
.t-w16 { width: 16px; } .t-w16 svg { width: 14px; height: 16px; }
.t-fra { width: 44px; font-size: 11px; }
.tray > .t-clock { width: 62px; flex-direction: column; font-size: 11px; line-height: 18px; white-space: nowrap; }
.t-clock b { font-weight: 400; }
.t-notif { width: 46px; } .t-notif svg { width: 16px; height: 16px; }
.t-line { width: 1px; height: 40px; background: #5a5a5e; margin-left: 6px; }
```
